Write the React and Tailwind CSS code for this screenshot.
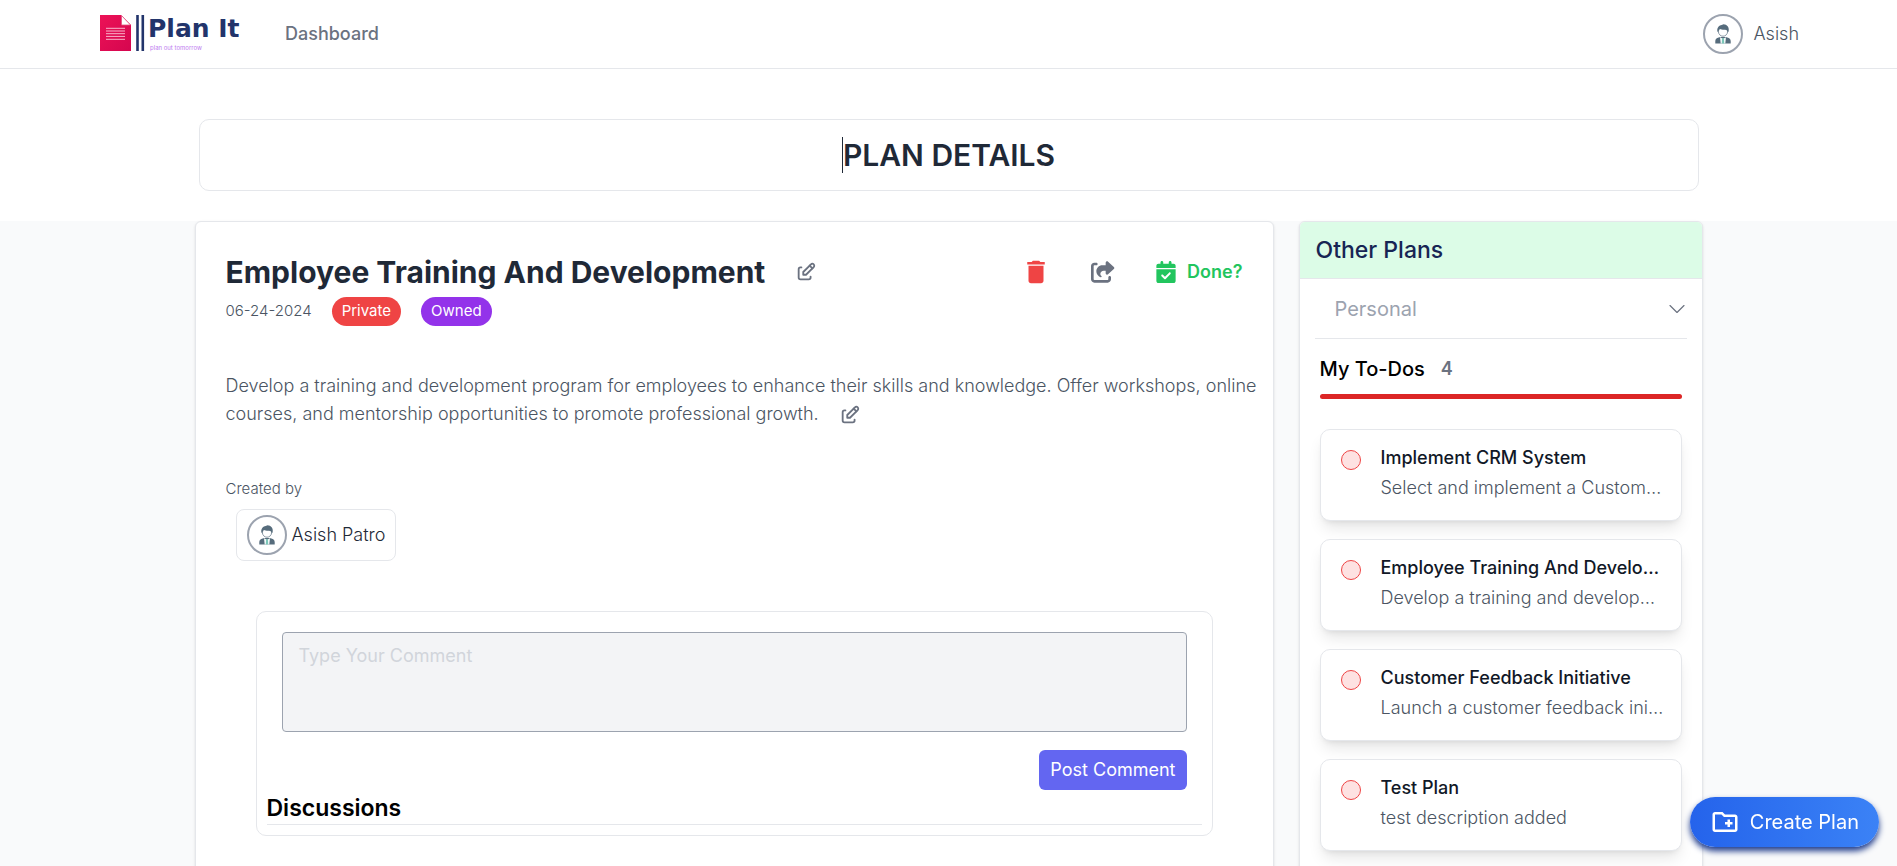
import { MdDelete, MdOutlineCreateNewFolder } from "react-icons/md";
import { FaCalendarCheck, FaShareFromSquare } from "react-icons/fa6";
import { TbEdit } from "react-icons/tb";
import { LuChevronDown } from "react-icons/lu";

const plans = [
  { title: "Implement CRM System", text: "Select and implement a Custom…" },
  { title: "Employee Training And Develo…", text: "Develop a training and develop…" },
  { title: "Customer Feedback Initiative", text: "Launch a customer feedback ini…" },
  { title: "Test Plan", text: "test description added" },
];

function Logo() {
  return (
    <svg width="145" height="52" viewBox="0 -6 145 52" role="img" aria-label="Plan It">
      <defs>
        <linearGradient id="doc" x1="0" y1="0" x2="1" y2="1">
          <stop offset="0" stopColor="#ec1257" />
          <stop offset="1" stopColor="#d5064f" />
        </linearGradient>
      </defs>
      <path d="M0 1H21L31 11V37H0Z" fill="url(#doc)" />
      <path d="M21.5 1.5V11H30.5Z" fill="#fff" stroke="#e2507f" strokeWidth="0.8" />
      <path d="M6 14.3H25M6 17H25M6 19.7H25M6 22.4H25M6 25.3H25" stroke="#f9b4cb" strokeWidth="1" />
      <path d="M37.5 1V37M42.8 1V37" stroke="#22346b" strokeWidth="2.6" />
      <text x="48" y="22.5" fill="#22346b" fontFamily="DejaVu Sans, sans-serif" fontWeight="700" fontSize="25">
        Plan It
      </text>
      <text x="50" y="36" fill="#c07cf0" fontFamily="Inter, sans-serif" fontSize="6">
        plan out tomorrow
      </text>
    </svg>
  );
}

function Avatar() {
  return (
    <span className="flex size-10 shrink-0 items-center justify-center rounded-full border-2 border-[#9ca3af] bg-white">
      <svg width="16" height="20" viewBox="0 0 16 20" aria-hidden="true">
        <path d="M0.3 19.5V17.2C0.3 15 1.6 14 3.6 13.6L5.5 13H10.5L12.4 13.6C14.4 14 15.7 15 15.7 17.2V19.5Z" fill="#566c7c" />
        <path d="M5 13.2L8 14.8L11 13.2L10.3 19.5H5.7Z" fill="#f4fbfa" />
        <path d="M7.1 14.2H8.9L9.2 19.5H6.8Z" fill="#7cc7b9" />
        <circle cx="8" cy="7.6" r="4.6" fill="#fff" stroke="#8a99a5" strokeWidth="1" />
        <path d="M2.4 7.6C1.6 3.2 4.6 1.2 6.6 1L8.6 0.3C11.8 0.6 14.6 2.8 13.6 7.6L12.6 8.2C12.4 6.6 11.6 5.8 10 5.8C8 6 5.8 5.4 5 5C3.8 5.6 3.5 6.8 3.4 8.2Z" fill="#566c7c" />
      </svg>
    </span>
  );
}

function Header() {
  return (
    <header className="border-b border-gray-200 bg-white pr-[98px] pl-[100px]">
      <div className="flex h-[68px] items-center justify-between">
        <div className="flex items-center gap-10">
          <a href="#home">
            <Logo />
          </a>
          <a href="#dashboard" className="text-lg font-medium text-[#6b7280]">
            Dashboard
          </a>
        </div>
        <a href="#profile" className="flex items-center gap-[10px] text-lg font-light text-[#4b5563]">
          <Avatar />
          Asish
        </a>
      </div>
    </header>
  );
}

function PlanCard() {
  return (
    <main className="min-w-0 flex-1 rounded-md border border-gray-200 bg-white px-[30px] pt-8 pb-10 shadow-sm">
      <div className="flex items-center justify-between">
        <div className="flex items-center gap-[30px]">
          <h2 className="text-3xl font-bold text-[#1f2937]">Employee Training And Development</h2>
          <button type="button" aria-label="Edit title" className="text-[#6b7280]">
            <TbEdit size={22} />
          </button>
        </div>
        <div className="flex items-center gap-10">
          <button type="button" aria-label="Delete plan" className="text-[#ef4444]">
            <MdDelete size={30} />
          </button>
          <button type="button" aria-label="Share plan" className="text-[#6b7280]">
            <FaShareFromSquare size={24} />
          </button>
          <button type="button" className="flex items-center gap-[10px] text-lg font-semibold text-[#22c55e]">
            <FaCalendarCheck size={22} />
            Done?
          </button>
        </div>
      </div>

      <div className="mt-[7px] flex items-center gap-5">
        <span className="text-[15px] font-light text-[#4b5563]">06-24-2024</span>
        <span className="flex h-[29px] items-center rounded-full bg-[#ef4444] px-[10px] text-[15px] text-white">Private</span>
        <span className="flex h-[29px] items-center rounded-full bg-[#9333ea] px-[10px] text-[15px] text-white">Owned</span>
      </div>

      <p className="mt-[46px] -mr-5 text-lg font-light text-[#4b5563]">
        Develop a training and development program for employees to enhance their skills and knowledge. Offer workshops, online
        courses, and mentorship opportunities to promote professional growth.
        <button type="button" aria-label="Edit description" className="ml-5 align-middle text-[#6b7280]">
          <TbEdit size={22} />
        </button>
      </p>

      <p className="mt-[51px] text-[15px] leading-5 font-light text-[#4b5563]">Created by</p>
      <div className="mt-[10px] ml-[10px] flex w-fit items-center gap-[5px] rounded-lg border border-gray-200 px-[10px] py-[5px]">
        <Avatar />
        <span className="text-lg font-light text-[#1f2937]">Asish Patro</span>
      </div>

      <section className="mx-[30px] mt-[50px] rounded-[10px] border border-gray-200 p-[10px]">
        <form className="flex flex-col items-end gap-[18px] px-[15px] pt-[10px]">
          <textarea
            aria-label="Comment"
            placeholder="Type Your Comment"
            className="h-[100px] w-full resize-none rounded border border-[#9ca3af] bg-[#f3f4f6] px-4 py-[9px] text-lg placeholder:text-[#d1d5db]"
          />
          <button type="button" className="h-10 rounded-md bg-[#6366f1] px-[11px] text-lg text-white">
            Post Comment
          </button>
        </form>
        <h3 className="mt-[2px] border-b border-gray-200 text-[23px]/[32px] font-semibold text-black">Discussions</h3>
      </section>
    </main>
  );
}

function Sidebar() {
  return (
    <aside className="w-[404px] shrink-0 overflow-hidden rounded-md border border-gray-200 bg-white pb-10 shadow-sm">
      <h2 className="flex h-[57px] items-center border-b border-gray-200 bg-[#dcfce7] px-4 text-[23px] font-medium text-[#172554]">
        Other Plans
      </h2>
      <div className="relative mx-[15px] border-b border-gray-200">
        <select aria-label="Plan type" className="h-[59px] w-full appearance-none bg-transparent px-5 text-xl text-[#9ca3af]">
          <option>Personal</option>
        </select>
        <LuChevronDown size={28} strokeWidth={1} className="pointer-events-none absolute top-4 -right-1 text-[#6b7280]" />
      </div>
      <div className="px-5">
        <div className="mt-4 flex items-center gap-4">
          <h3 className="text-xl font-medium text-black">My To-Dos</h3>
          <span className="text-lg font-semibold text-[#6b7280]">4</span>
        </div>
        <div className="mt-[11px] h-[5px] rounded-full bg-[#dc2626]" />
        <ul className="mt-[30px] flex flex-col gap-[18px]">
          {plans.map((plan) => (
            <li key={plan.title} className="flex gap-5 rounded-[10px] border border-gray-200 bg-white px-5 pt-[13px] pb-[17px] shadow-lg">
              <span className="mt-[7px] size-5 shrink-0 rounded-full border border-[#ef4444] bg-[#fee2e2]" />
              <div className="whitespace-nowrap">
                <h4 className="text-lg/[30px] font-medium text-[#111827]">{plan.title}</h4>
                <p className="text-lg/[30px] font-light text-[#4b5563]">{plan.text}</p>
              </div>
            </li>
          ))}
        </ul>
      </div>
    </aside>
  );
}

export default function App() {
  return (
    <div className="flex min-h-screen flex-col bg-white font-['Inter',sans-serif]">
      <Header />
      <div className="mx-auto mt-[50px] mb-[30px] w-full max-w-[1500px] rounded-[10px] border border-gray-200">
        <h1 className="flex h-[70px] items-center justify-center text-3xl font-semibold text-[#1f2937]">
          <span className="border-l border-[#1f2937]">PLAN DETAILS</span>
        </h1>
      </div>
      <div className="flex-1 bg-gray-50">
        <div className="mx-auto flex max-w-[1508px] gap-[25px]">
          <PlanCard />
          <Sidebar />
        </div>
      </div>
      <button
        type="button"
        className="fixed right-[18px] bottom-[19px] flex h-[50px] items-center gap-[10px] rounded-full bg-linear-to-r from-[#2563eb] to-[#3b82f6] px-5 text-xl font-normal text-white shadow-[0_4px_6px_#1e3a8a]"
      >
        <MdOutlineCreateNewFolder size={30} />
        Create Plan
      </button>
    </div>
  );
}
